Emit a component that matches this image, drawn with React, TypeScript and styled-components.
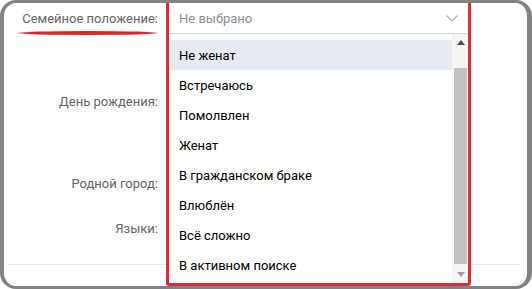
import React from "react";
import styled, { createGlobalStyle } from "styled-components";

const options = [
  "Не женат",
  "Встречаюсь",
  "Помолвлен",
  "Женат",
  "В гражданском браке",
  "Влюблён",
  "Всё сложно",
  "В активном поиске",
];

const rows = [
  { label: "День рождения:", gap: 53 },
  { label: "Родной город:", gap: 52 },
  { label: "Языки:", gap: 15 },
];

const App = () => {
  return (
    <>
      <GlobalStyle />
      <Frame>
        <Row $gap={0}>
          <Label>
            Семейное положение:
            <Marker />
          </Label>
          <Control>
            <Combo>
              <Field>
                <Placeholder>Не выбрано</Placeholder>
                <svg width="12" height="7" viewBox="0 0 12 7">
                  <polyline
                    points="0.5,0.5 6,6 11.5,0.5"
                    fill="none"
                    stroke="#aab2bd"
                    strokeWidth="1.2"
                  />
                </svg>
              </Field>
              <List>
                <Items>
                  {options.map((option, i) => (
                    <Item key={option} $active={i === 0}>
                      {option}
                    </Item>
                  ))}
                </Items>
                <Scrollbar>
                  <Arrow>
                    <svg width="8" height="5" viewBox="0 0 8 5">
                      <polygon points="0,5 4,0 8,5" fill="#4a4a4a" />
                    </svg>
                  </Arrow>
                  <Track>
                    <Thumb />
                  </Track>
                  <Arrow>
                    <svg width="8" height="5" viewBox="0 0 8 5">
                      <polygon points="0,0 8,0 4,5" fill="#9e9e9e" />
                    </svg>
                  </Arrow>
                </Scrollbar>
              </List>
            </Combo>
          </Control>
        </Row>
        {rows.map((row) => (
          <Row key={row.label} $gap={row.gap}>
            <Label>{row.label}</Label>
            <Control />
          </Row>
        ))}
        <Separator />
      </Frame>
    </>
  );
};

export default App;

const GlobalStyle = createGlobalStyle`
  body {
    margin: 0;
    background: #ffffff;
    font-family: Roboto, "Open Sans", Arial, sans-serif;
    font-size: 13px;
  }
`;

const Frame = styled.div`
  box-sizing: border-box;
  width: 532px;
  height: 289px;
  border-style: solid;
  border-color: #838383;
  border-width: 3px 5px 3px 4px;
  border-radius: 16px;
  background: #ffffff;
  overflow: hidden;
  display: flex;
  flex-direction: column;
`;

const Row = styled.div<{ $gap: number }>`
  display: grid;
  grid-template-columns: 154px 1fr;
  column-gap: 11px;
  align-items: center;
  height: 30px;
  margin-top: ${(p) => p.$gap}px;
`;

const Label = styled.div`
  position: relative;
  text-align: right;
  color: #656565;
  white-space: nowrap;
`;

const Marker = styled.span`
  position: absolute;
  left: 13px;
  right: 0;
  top: 20px;
  height: 4px;
  border-radius: 50%;
  background: linear-gradient(
    90deg,
    rgba(218, 36, 46, 0.5),
    #da242e 10%,
    #da242e 90%,
    rgba(218, 36, 46, 0.6)
  );
`;

const Control = styled.div`
  position: relative;
  height: 30px;
`;

const Combo = styled.div`
  position: absolute;
  z-index: 2;
  top: -3px;
  left: -3px;
  box-sizing: border-box;
  width: 305px;
  height: 286px;
  border: 3px solid #d3303b;
  border-radius: 3px;
  background: #ffffff;
  display: flex;
  flex-direction: column;
`;

const Field = styled.div`
  height: 30px;
  flex-shrink: 0;
  display: flex;
  align-items: center;
  justify-content: space-between;
  padding: 0 10px;
  border-bottom: 1px solid #d3d9de;
`;

const Placeholder = styled.span`
  color: #8a8f96;
`;

const List = styled.div`
  flex: 1;
  display: flex;
  min-height: 0;
`;

const Items = styled.div`
  flex: 1;
  padding-top: 6px;
`;

const Item = styled.div<{ $active: boolean }>`
  height: 30px;
  display: flex;
  align-items: center;
  padding-left: 10px;
  color: #000000;
  background: ${(p) => (p.$active ? "#e5ebf1" : "transparent")};
`;

const Scrollbar = styled.div`
  width: 16px;
  display: flex;
  flex-direction: column;
  background: #f5f5f5;
`;

const Arrow = styled.div`
  height: 17px;
  display: flex;
  align-items: center;
  justify-content: center;
  padding-left: 2px;
`;

const Track = styled.div`
  flex: 1;
  padding: 17px 1px 2px 2px;
`;

const Thumb = styled.div`
  height: 100%;
  background: #c1c1c1;
`;

const Separator = styled.div`
  margin: 21px 6px 0 4px;
  height: 1px;
  background: #e7e8ec;
`;
